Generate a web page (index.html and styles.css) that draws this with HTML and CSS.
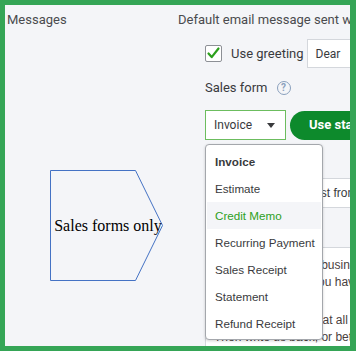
FILE: index.html
```html
<!DOCTYPE html>
<html>
<head>
<meta charset="UTF-8">
<link rel="stylesheet" href="styles.css">
</head>
<body>
<div class="frame">
<div class="page">
  <div class="side">Messages</div>
  <div class="main">
    <div class="heading">Default email message sent with sales forms</div>
    <div class="opts">
      <div class="greet">
        <span class="check"><svg width="15" height="15" viewBox="0 0 15 15"><path d="M2.5 7.5l3.2 3.6L12.5 2.5" fill="none" stroke="#2ca01c" stroke-width="2.2" stroke-linecap="round" stroke-linejoin="round"/></svg></span>
        <span class="greet-label">Use greeting</span>
        <div class="field dear">Dear</div>
      </div>
      <div class="formlabel">Sales form <span class="help">?</span></div>
      <div class="formrow">
        <div class="selwrap">
          <div class="select">Invoice <span class="caret"></span></div>
          <div class="menu">
            <div class="item bold">Invoice</div>
            <div class="item">Estimate</div>
            <div class="item active">Credit Memo</div>
            <div class="item">Recurring Payment</div>
            <div class="item">Sales Receipt</div>
            <div class="item">Statement</div>
            <div class="item">Refund Receipt</div>
          </div>
        </div>
        <div class="btn">Use standard message</div>
      </div>
      <div class="field subject">Our invoice, the latest from Craig's</div>
      <div class="textarea">
        <div class="line">We appreciate your business. Please</div>
        <div class="line">Just let us know if you have any</div>
        <div class="line gap">We are here to help at all times,</div>
        <div class="line">Then write us back, or better yet</div>
      </div>
    </div>
  </div>
</div>
<div class="shape">
  <svg width="116" height="114" viewBox="0 0 116 114"><path d="M1.5 1.5H86.5L113.5 56.5L86.5 111.5H1.5Z" fill="none" stroke="#4472c4" stroke-width="1"/></svg>
  <span class="shape-text">Sales forms only</span>
</div>
</div>
</body>
</html>
```

FILE: styles.css
```css
body{margin:0;font-family:Roboto,"Liberation Sans",sans-serif;color:#393a3d}
.frame{position:relative;width:356px;height:351px;box-sizing:border-box;border:5px solid #35a556;border-right-width:6px;background:#f4f5f8;overflow:hidden}
.page{display:flex;padding:6px 0 0 2px;font-size:13px;line-height:18px}
.side{width:171px;flex:none;color:#4a4b4e}
.main{flex:none;width:320px}
.heading{white-space:nowrap;color:#4a4b4e}
.opts{margin-left:27px}
.greet{display:flex;align-items:center;margin-top:10px;height:29px}
.check{width:17px;height:17px;box-sizing:border-box;border:1px solid #8d9096;border-radius:2px;background:#fff;display:flex;align-items:center;justify-content:center;flex:none}
.greet-label{margin-left:9px;white-space:nowrap}
.field{background:#fff;border:1px solid #d4d7dc;box-sizing:border-box;font-size:12px;white-space:nowrap}
.dear{margin-left:3px;width:120px;height:29px;padding:0 8px;display:flex;align-items:center}
.formlabel{margin-top:11px;display:flex;align-items:center}
.help{margin-left:9px;width:14px;height:14px;box-sizing:border-box;border:1.5px solid #8aa0bd;border-radius:50%;color:#8aa0bd;font-size:10px;line-height:11px;text-align:center;font-weight:bold}
.formrow{display:flex;align-items:center;margin-top:13px}
.selwrap{position:relative;flex:none}
.select{width:81px;height:30px;box-sizing:border-box;border:1px solid #6cbd5e;background:#fff;font-size:12px;padding:0 0 0 8px;display:flex;align-items:center}
.caret{margin-left:15px;width:0;height:0;border-left:4px solid transparent;border-right:4px solid transparent;border-top:5px solid #393a3d}
.btn{margin-left:4px;height:29px;padding:0 19px;border-radius:15px;background:#0d8a2c;color:#fff;font-weight:bold;font-size:13px;display:flex;align-items:center;white-space:nowrap}
.menu{position:absolute;top:34px;left:0;width:118px;box-sizing:border-box;padding:3px 1px 2px;background:#fff;border:1px solid #a4a7ac;border-radius:4px;box-shadow:0 1px 3px rgba(0,0,0,.18);z-index:2;font-family:"Liberation Sans",Arial,sans-serif}
.item{height:27px;line-height:27px;padding-left:8px;font-size:11.65px;white-space:nowrap;color:#393a3d}
.bold{font-weight:bold}
.active{background:#f4f5f8;color:#2ca01c}
.subject{margin-top:38px;width:300px;height:30px;padding:0 8px;display:flex;align-items:center;font-family:"Liberation Sans",Arial,sans-serif}
.textarea{margin-top:39px;width:300px;height:120px;background:#fff;border:1px solid #d4d7dc;box-sizing:border-box;padding:9px 8px;font-size:12px;line-height:17px;font-family:"Liberation Sans",Arial,sans-serif;color:#4a4140}
.line{white-space:nowrap}
.gap{margin-top:21px}
.shape{position:absolute;left:44px;top:164px;width:116px;height:114px}
.shape svg{display:block}
.shape-text{position:absolute;left:0;top:0;width:116px;height:114px;display:flex;align-items:center;justify-content:center;font-family:"Liberation Serif","Times New Roman",serif;font-size:16px;color:#000;white-space:nowrap;padding-left:2px;box-sizing:border-box}
```
